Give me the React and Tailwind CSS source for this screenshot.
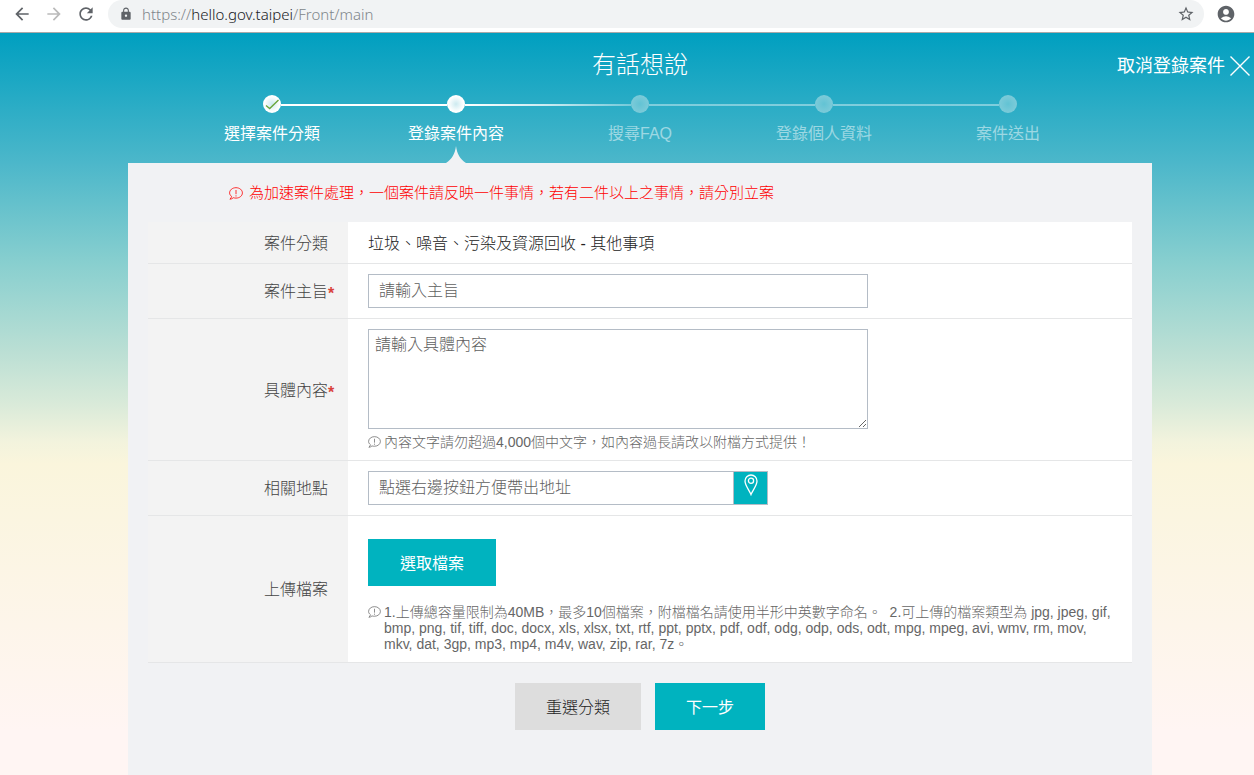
import React from "react";
import clsx from "clsx";
import {
  MdAccountCircle,
  MdArrowBack,
  MdArrowForward,
  MdLock,
  MdRefresh,
  MdStarBorder,
} from "react-icons/md";

const STEPS = [
  { label: "選擇案件分類", state: "done" },
  { label: "登錄案件內容", state: "current" },
  { label: "搜尋FAQ", state: "todo" },
  { label: "登錄個人資料", state: "todo" },
  { label: "案件送出", state: "todo" },
];

// connector halves on the left and right of each dot
const LINES = [
  ["bg-transparent", "bg-white"],
  ["bg-white", "bg-linear-to-r from-white to-white/75"],
  ["bg-linear-to-r from-white/75 to-white/35", "bg-white/40"],
  ["bg-white/40", "bg-white/40"],
  ["bg-white/40", "bg-transparent"],
];

function NoticeIcon({ className }) {
  return (
    <svg viewBox="0 0 14 13" className={className} fill="none" stroke="currentColor" strokeWidth="0.8">
      <path d="M2.6 9.4C1.3 8.5.6 7.300.6 5.900.6 3 3.400.7 7 .7s6.400 2.300 6.400 5.200S10.600 11.100 7 11.100c-1 0-1.900-.1-2.700-.4-.8.9-1.900 1.400-3.400 1.500.9-.8 1.500-1.700 1.700-2.800z" />
      <path d="M7 3v4.200M7 8.300v1.200" />
    </svg>
  );
}

function PinIcon() {
  return (
    <svg viewBox="0 0 14 22" className="h-[22px] w-[14px]" fill="none" stroke="currentColor" strokeWidth="1.3">
      <path d="M7 20.500C5.500 16.500 1 11.500 1 7a6 6 0 0 1 12 0c0 4.500-4.500 9.500-6 13.500z" />
      <circle cx="7" cy="6.800" r="2.600" />
    </svg>
  );
}

function BrowserBar() {
  return (
    <div className="flex h-[33px] items-start border-b border-[#a9a9a9] bg-white pl-3 pr-[18px] text-[#5f6368]">
      <div className="flex h-7 items-center gap-3">
        <button type="button" aria-label="Back"><MdArrowBack size={20} /></button>
        <button type="button" aria-label="Forward" className="text-[#bababa]"><MdArrowForward size={20} /></button>
        <button type="button" aria-label="Reload"><MdRefresh size={20} /></button>
      </div>
      <div className="ml-3 flex h-7 flex-1 items-center rounded-r-full rounded-l-full bg-[#f1f3f4] pl-[11px] pr-[9px]">
        <MdLock size={14} />
        <span className="ml-[9px] flex-1 font-['Noto_Sans'] text-[15px] font-light text-[#80868b]">
          https://<span className="text-[#202124]">hello.gov.taipei</span>/Front/main
        </span>
        <button type="button" aria-label="Bookmark"><MdStarBorder size={18} /></button>
      </div>
      <button type="button" aria-label="Profile" className="ml-3 flex h-7 items-center">
        <MdAccountCircle size={20} />
      </button>
    </div>
  );
}

function StepDot({ state }) {
  return (
    <span
      className={clsx(
        "flex size-[18px] items-center justify-center rounded-full",
        state === "todo"
          ? "bg-radial from-[#62c3d4] to-[#86cedb]"
          : "bg-radial from-[#cdeaf0] to-white to-60%"
      )}
    >
      {state === "done" && (
        <svg viewBox="0 0 18 18" className="size-[18px]" fill="none" stroke="#6aa63c" strokeWidth="1.400">
          <path d="M3 10.500l3.700 3L15.500 5" />
        </svg>
      )}
    </span>
  );
}

function Stepper() {
  return (
    <ol className="mx-auto grid w-full max-w-[920px] grid-cols-5">
      {STEPS.map((step, i) => (
        <li key={step.label} className="relative flex h-[68px] flex-col items-center">
          <div className="flex w-full items-center">
            <span className={clsx("mt-[2px] h-[2px] flex-1", LINES[i][0])} />
            <StepDot state={step.state} />
            <span className={clsx("mt-[2px] h-[2px] flex-1", LINES[i][1])} />
          </div>
          <span
            className={clsx(
              "mt-[9px] text-[16px] leading-6 font-normal",
              step.state === "todo" ? "text-white/50" : "text-white"
            )}
          >
            {step.label}
          </span>
          {step.state === "current" && (
            <svg viewBox="0 0 20 17" className="absolute bottom-0 h-[17px] w-5 text-[#f1f2f4]" fill="currentColor">
              <path d="M0 17C6 13 9 8 10 0c1 8 4 13 10 17z" />
            </svg>
          )}
        </li>
      ))}
    </ol>
  );
}

function Row({ label, htmlFor, required, className, children }) {
  const Tag = htmlFor ? "label" : "span";
  return (
    <div className="flex border-b border-[#e5e6e7] bg-white">
      <div className="flex w-[200px] shrink-0 items-center justify-end bg-[#f3f3f3] pr-5 pt-[2px]">
        <Tag htmlFor={htmlFor} className="relative text-[16px] leading-6 text-[#444]">
          {label}
          {required && <span className="absolute left-full top-[2px] text-[16px] leading-6 font-bold text-[#d9423c]">*</span>}
        </Tag>
      </div>
      <div className={clsx("min-w-0 flex-1 px-5", className)}>{children}</div>
    </div>
  );
}

function Note({ className, children }) {
  return (
    <div className={clsx("flex items-start gap-[3px] text-[14px] leading-4 text-[#666]", className)}>
      <NoticeIcon className="mt-[2px] h-3 w-[13px] shrink-0" />
      <p>{children}</p>
    </div>
  );
}

const field = "border border-[#b4bcc6] bg-white text-[16px] text-[#333] placeholder:text-[#606060] outline-none";
const button = "h-[47px] pt-[2px] text-[16px]";

export default function App() {
  return (
    <div
      lang="zh-TW"
      className="flex min-h-screen flex-col overflow-hidden font-['Liberation_Sans','Noto_Sans_CJK_TC',sans-serif] font-light"
    >
      <BrowserBar />
      <div className="flex flex-1 flex-col bg-[linear-gradient(180deg,#009fc0_0%,#4cb7ca_17.5%,#88cfcf_31%,#bbdfd4_43%,#d9ead9_50%,#f2f3dd_55%,#faf5dc_58%,#fff5f3_94%)]">
        <header className="relative pl-[26px]">
          <h1 className="pt-4 text-center text-[24px] leading-8 text-white">有話想說</h1>
          <button type="button" className="absolute right-[3px] top-[21px] flex items-center gap-1 text-[18px] leading-6 font-normal text-white">
            取消登錄案件
            <svg viewBox="0 0 22 22" className="size-[22px]" stroke="currentColor" strokeWidth="1.400">
              <path d="M1.500 1.500l19 19M20.500 1.500l-19 19" />
            </svg>
          </button>
          <div className="mt-[14px]">
            <Stepper />
          </div>
        </header>

        <div className="flex flex-1 pl-[26px]">
          <main className="mx-auto w-full max-w-[1024px] bg-[#f1f2f4] px-5 pb-11">
            <div className="flex h-[59px] items-center gap-[6px] pl-[81px] pt-[2px] text-[15px] text-[#f00]">
              <NoticeIcon className="h-[13px] w-[14px] shrink-0" />
              <p>為加速案件處理，一個案件請反映一件事情，若有二件以上之事情，請分別立案</p>
            </div>

            <form onSubmit={(e) => e.preventDefault()}>
              <Row label="案件分類" className="flex h-[41px] items-center pt-[2px] text-[16px] text-[#222]">
                垃圾、噪音、污染及資源回收 - 其他事項
              </Row>
              <Row label="案件主旨" htmlFor="subject" required className="py-[10px]">
                <input id="subject" type="text" placeholder="請輸入主旨" className={clsx(field, "block h-[34px] w-full max-w-[500px] px-[10px]")} />
              </Row>
              <Row label="具體內容" htmlFor="content" required className="py-[10px]">
                <textarea id="content" placeholder="請輸入具體內容" className={clsx(field, "block h-[100px] w-full max-w-[500px] px-[6px] py-[3px] leading-6")} />
                <Note className="mt-[5px]">內容文字請勿超過4,000個中文字，如內容過長請改以附檔方式提供！</Note>
              </Row>
              <Row label="相關地點" htmlFor="place" className="py-[10px]">
                <div className="flex h-[34px] w-full max-w-[400px] border border-[#b4bcc6]">
                  <input id="place" type="text" placeholder="點選右邊按鈕方便帶出地址" className="min-w-0 flex-1 px-[10px] text-[16px] outline-none placeholder:text-[#606060]" />
                  <button type="button" aria-label="地圖" className="flex w-[34px] justify-center border-l border-[#b4bcc6] bg-[#00b3bf] pt-[2px] text-white">
                    <PinIcon />
                  </button>
                </div>
              </Row>
              <Row label="上傳檔案" className="pb-[10px] pt-[23px]">
                <button type="button" className={clsx(button, "bg-[#00b3bf] px-8 font-normal text-white")}>選取檔案</button>
                <Note className="mt-[18px]">
                  1.上傳總容量限制為40MB，最多10個檔案，附檔檔名請使用半形中英數字命名。&nbsp; 2.可上傳的檔案類型為 jpg, jpeg, gif,
                  bmp, png, tif, tiff, doc, docx, xls, xlsx, txt, rtf, ppt, pptx, pdf, odf, odg, odp, ods, odt, mpg, mpeg, avi, wmv, rm, mov,
                  mkv, dat, 3gp, mp3, mp4, m4v, wav, zip, rar, 7z。
                </Note>
              </Row>
              <div className="mt-5 flex justify-center gap-[14px]">
                <button type="button" className={clsx(button, "bg-[#ddd] px-[31px] text-[#222]")}>重選分類</button>
                <button type="submit" className={clsx(button, "bg-[#00b3bf] px-[31px] font-normal text-white")}>下一步</button>
              </div>
            </form>
          </main>
        </div>
      </div>
    </div>
  );
}
